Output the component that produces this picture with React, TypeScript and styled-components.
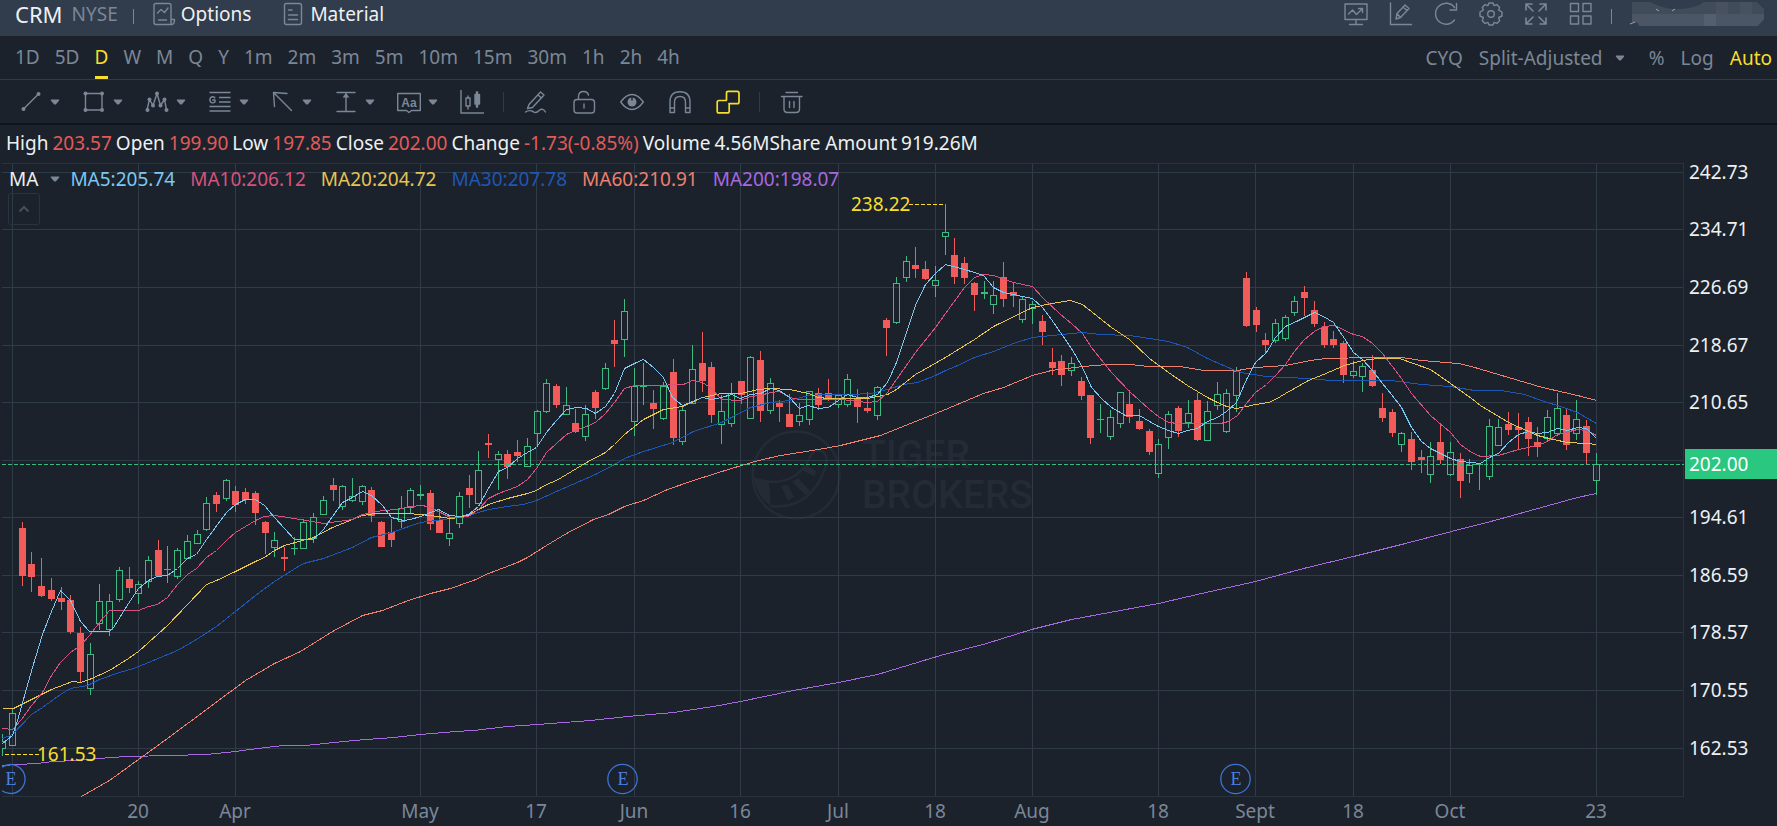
import React from "react";
import styled, { createGlobalStyle, css } from "styled-components";

const color = {
  page: "#1b222b",
  header: "#313c4c",
  line: "#2f3b47",
  muted: "#7b8797",
  text: "#eef0f2",
  accent: "#f8de2c",
  up: "#3cba80",
  down: "#f15b59",
  watermark: "#232b35",
};

const GlobalStyle = createGlobalStyle`
  * { box-sizing: border-box; }
  body {
    margin: 0;
    background: ${color.page};
    color: ${color.text};
    font-family: "Noto Sans", "Open Sans", sans-serif;
    font-size: 19px;
    line-height: 24px;
  }
  button, select { font: inherit; color: inherit; background: none; border: 0; padding: 0; margin: 0; cursor: pointer; }
`;

const Screen = styled.div`
  min-height: 100vh;
`;

const Header = styled.header`
  display: flex;
  align-items: center;
  height: 36px;
  padding: 0 13px 8px 15px;
  background: ${color.header};
`;

const Ticker = styled.h1`
  margin: 0 9px 0 0;
  font-size: 22px;
  line-height: 28px;
  font-weight: 400;
`;

const Exchange = styled.span`
  color: ${color.muted};
`;

const HeaderRule = styled.span`
  width: 1px;
  height: 15px;
  margin: 4px 18px 0 15px;
  background: ${color.muted};
`;

const HeaderLink = styled.a`
  display: flex;
  align-items: center;
  gap: 5px;
  margin-right: 30px;
  color: inherit;
  text-decoration: none;
`;

const HeaderTools = styled.div`
  display: flex;
  align-items: center;
  gap: 21px;
  margin-left: auto;
  margin-right: 3px;
`;

const IconButton = styled.button<{ $active?: boolean }>`
  display: flex;
  align-items: center;
  gap: 7px;
  color: ${(p) => (p.$active ? color.accent : color.muted)};
`;

const Tabs = styled.nav`
  display: flex;
  align-items: stretch;
  height: 44px;
  padding: 0 5px 0 15px;
  border-bottom: 1px solid ${color.line};
  color: ${color.muted};
`;

const TabGroup = styled.div`
  display: flex;
  gap: 15px;
`;

const Tab = styled.button<{ $active?: boolean }>`
  padding-top: 1px;
  border-bottom: 3px solid transparent;
  ${(p) =>
    p.$active &&
    css`
      color: ${color.accent};
      border-color: ${color.accent};
    `}
`;

const ScaleGroup = styled.div`
  display: flex;
  align-items: center;
  gap: 16px;
  margin-left: auto;
`;

const ScaleButton = styled.button<{ $active?: boolean }>`
  color: ${(p) => (p.$active ? color.accent : "inherit")};
`;

const SelectBox = styled.label`
  display: flex;
  align-items: center;
  gap: 12px;
  margin-right: 8px;
`;

const PlainSelect = styled.select`
  appearance: none;
  outline: 0;
`;

const Toolbar = styled.div`
  display: flex;
  align-items: center;
  gap: 24px;
  height: 45px;
  padding: 0 19px;
  border-bottom: 2px solid #0f141b;
`;

const MenuTools = styled.div`
  display: flex;
  align-items: center;
  gap: 22px;
`;

const ToolRule = styled.span`
  width: 1px;
  height: 20px;
  margin: 0 -4px -1px -5px;
  background: ${color.line};
`;

const Quote = styled.dl`
  display: flex;
  align-items: center;
  height: 38px;
  margin: 0;
  padding: 0 6px 2px;
  white-space: pre;
`;

const QuoteItem = styled.div<{ $tight?: boolean }>`
  display: flex;
  gap: 4px;
  margin-right: ${(p) => (p.$tight ? 0 : 4)}px;
`;

const QuoteLabel = styled.dt`
  margin: 0;
`;

const QuoteValue = styled.dd<{ $down?: boolean }>`
  margin: 0;
  color: ${(p) => (p.$down ? "#e35a58" : color.text)};
`;

const ChartArea = styled.main`
  position: relative;
`;

const ChartSvg = styled.svg`
  display: block;
  width: 100%;
  height: auto;
  font-family: "Noto Sans", "Open Sans", sans-serif;
  font-size: 19px;
`;

const Legend = styled.div`
  position: absolute;
  top: 4px;
  left: 9px;
  display: flex;
  align-items: center;
  gap: 15px;
`;

const LegendMenu = styled.button`
  display: flex;
  align-items: center;
  gap: 12px;
  margin-right: -5px;
`;

const LegendItem = styled.span<{ $color: string }>`
  color: ${(p) => p.$color};
`;

const Collapse = styled.button`
  position: absolute;
  top: 30px;
  left: 8px;
  display: grid;
  place-items: center;
  width: 32px;
  height: 32px;
  border: 1px solid #2a343f;
  border-radius: 3px;
  color: #46505d;
`;

const Caret = () => (
  <svg width="10" height="6" viewBox="0 0 10 6" aria-hidden="true">
    <path d="M1 0.5h8q.6.6 0 1.200L6 5.200q-1 .8-2 0L1 1.700Q.4 1.100 1 .5z" fill={color.muted} />
  </svg>
);

type GlyphProps = { size?: number; children: React.ReactNode };
const Glyph = ({ size = 24, children }: GlyphProps) => (
  <svg
    width={size}
    height={size}
    viewBox="0 0 24 24"
    fill="none"
    stroke="currentColor"
    strokeWidth="1.4"
    strokeLinecap="round"
    strokeLinejoin="round"
    aria-hidden="true"
  >
    {children}
  </svg>
);

const dot = (x: number, y: number) => <circle key={`${x}-${y}`} cx={x} cy={y} r="2" fill="currentColor" stroke="none" />;

const menuTools = [
  {
    name: "Trend line",
    icon: (
      <>
        <path d="M4.500 19L19 4.500" />
        {dot(4.5, 19)}
        {dot(19.5, 4)}
      </>
    ),
  },
  {
    name: "Rectangle",
    icon: (
      <>
        <path d="M3.500 3.500h16.500v16.500h-16.500z" />
        {[dot(3.5, 3.5), dot(20, 3.5), dot(3.5, 20), dot(20, 20)]}
      </>
    ),
  },
  {
    name: "Wave pattern",
    icon: (
      <>
        <path d="M2 20L4.500 9.500 8 15.500 12 3.500l3.500 12L19.500 9.500l2 10.500" />
        {[dot(2.5, 20), dot(4.5, 9.5), dot(8, 15.5), dot(12, 3.5), dot(15.5, 15.5), dot(19.5, 9.5), dot(21.5, 20)]}
      </>
    ),
  },
  {
    name: "Gann lines",
    icon: (
      <>
        <path d="M1.500 2.500h21M11 7.500h11.500M11 12h11.500M1.500 16.500h21M1.500 21h21" strokeLinecap="butt" />
        <path d="M6.800 7.800Q5.800 6.600 4.300 6.700 2 7 1.900 9.800 2 12.800 4.600 12.900 6 12.900 7 12V10H4.800" />
      </>
    ),
  },
  { name: "Arrow", icon: <path d="M3.500 16.500L2.500 2.500 16 3.500M3 3L20.500 20.500" /> },
  {
    name: "Price range",
    icon: (
      <>
        <path d="M3 2.500h18M3 21.500h18M12 4v17" />
        <path d="M8.500 7.500L12 3l3.500 4.500z" fill="currentColor" stroke="none" />
      </>
    ),
  },
  {
    name: "Text note",
    icon: (
      <>
        <path d="M.7 3.500h22.600v17h-8.800L12 22.500 9.500 20.500H.7z" />
        <text x="12" y="16.500" textAnchor="middle" fontFamily="Liberation Sans, sans-serif" fontSize="12" fontWeight="700" fill="currentColor" stroke="none">
          Aa
        </text>
      </>
    ),
  },
];

const singleTools = [
  {
    name: "Freehand",
    icon: (
      <>
        <path d="M5 14.500L16.500 2 20 5 8.500 17.500 3.500 18.500zM14 5l3.500 3" />
        <path d="M1.500 22Q5 19.500 9 21.500 12 24 15 20.500 19 17.500 21.500 22" />
      </>
    ),
  },
  {
    name: "Lock drawings",
    icon: (
      <>
        <rect x="2" y="9.500" width="20.500" height="13.500" rx="3" />
        <path d="M6.500 9.500V6Q7 1.500 11.500 1.500 15.500 1.500 16.500 5M12 14v4" />
      </>
    ),
  },
  {
    name: "Show drawings",
    icon: (
      <>
        <path d="M.7 12Q6 4.500 12 4.500T23.300 12Q18 19.500 12 19.500T.7 12z" />
        <circle cx="12" cy="12" r="4.500" fill="currentColor" stroke="none" />
        <path d="M12 7v3" stroke={color.page} />
      </>
    ),
  },
  {
    name: "Magnet",
    icon: (
      <path d="M2 22.500V12Q2 1.800 12 1.800T22 12v10.500h-4.500V12q0-5.500-5.500-5.500T6.500 12v10.500zM2 18h4.500M17.500 18H22" />
    ),
  },
  {
    name: "Keep drawing",
    active: true,
    icon: (
      <path d="M10.500 10V3q0-1.700 1.700-1.700h9Q23 1.300 23 3v9q0 1.700-1.800 1.700H13M10 10.500H3Q1.200 10.500 1.200 12.200v9Q1.200 22.900 3 22.900h8.500q1.700 0 1.700-1.700V14" strokeWidth="1.700" />
    ),
  },
];

const headerTools = [
  {
    name: "Chart display",
    icon: (
      <>
        <path d="M1 2h22v15.500H1zM12 17.500V22M5.500 22.500h13" />
        <path d="M4.500 12l4-4 4 4.500 6-6M14.500 6.500h4v4" />
      </>
    ),
  },
  {
    name: "Edit chart",
    icon: <path d="M1.500 1v21.500h21M7 17l1-5.500L16 3l4 3.500-8.500 9zM8 11.500l3.500 4M14 5l4 3.500" />,
  },
  { name: "Refresh", icon: <path d="M20.500 5.500A10.500 10.500 0 1 0 20.500 18M22.500 1.500v6.500H16" /> },
  {
    name: "Settings",
    icon: (
      <>
        <path d="M10 1h4l1 2.600 2.800-1L20.600 5.400 19.700 8.200 23 10v4l-3.300 1.500.9 3.200-2.800 2.700-2.800-1L14 23h-4l-1-2.600-3 1-2.700-2.700 1-3.200L1 14v-4l3.300-1.800L3.300 5.400 6 2.600l3 1z" />
        <circle cx="12" cy="12" r="3.300" />
      </>
    ),
  },
  {
    name: "Full screen",
    icon: (
      <path d="M2 8V2h6M2 2l7 7M16 2h6v6M22 2l-7 7M2 16v6h6M2 22l7-7M22 16v6h-6M22 22l-7-7" strokeWidth="1.600" />
    ),
  },
  { name: "Layout", icon: <path d="M1.500 1.500h8v8h-8zM14 1.500h8v8h-8zM1.500 14h8v8h-8zM14 14h8v8h-8z" /> },
];

const periods = ["1D", "5D", "D", "W", "M", "Q", "Y", "1m", "2m", "3m", "5m", "10m", "15m", "30m", "1h", "2h", "4h"];

const quote = [
  { label: "High", value: "203.57", down: true },
  { label: "Open", value: "199.90", down: true },
  { label: "Low", value: "197.85", down: true },
  { label: "Close", value: "202.00", down: true },
  { label: "Change", value: "-1.73(-0.85%)", down: true },
  { label: "Volume", value: "4.56M", tight: true },
  { label: "Share Amount", value: "919.26M" },
];

/* Moving averages, as points of the plot. */
const averages = [
  {
    label: "MA200:198.07",
    color: "#a768e0",
    points:
      "2,765 17,764 37,763 53,761 77,760 110,757 127,756 170,755 206,754 235,751 257,748 283,745 305,745 353,740 393,737 420,734 455,731 473,730 507,726 537,724 590,720 627,716 673,712 713,706 740,701 793,690 838,682 877,674 940,655 986,643 1031,629 1071,619 1158,603 1201,593 1255,581 1303,568 1353,556 1405,543 1451,531 1494,520 1577,497 1596,493",
  },
  {
    label: "MA60:210.91",
    color: "#ef7f6e",
    points:
      "81,796 109,780 138,759 167,738 206,709 245,680 274,663 300,651 332,631 362,615 382,610 408,600 430,593 450,588 473,580 488,573 517,562 527,557 546,545 566,533 593,519 608,514 624,506 643,500 667,489 693,480 731,468 758,460 780,455 818,449 840,445 880,435 915,421 945,409 983,393 1003,387 1032,375 1051,370 1082,366 1107,364 1130,364 1148,366 1180,366 1203,370 1237,370 1255,367 1285,365 1310,360 1325,358 1372,357 1401,357 1421,360 1458,363 1471,366 1508,377 1542,387 1577,395 1596,400",
  },
  {
    label: "MA30:207.78",
    color: "#1f57b4",
    points:
      "2,738 12,734 31,714 42,707 60,694 70,688 87,685 99,679 119,672 133,668 148,662 177,650 196,639 216,626 235,611 255,595 274,581 293,569 303,563 323,558 352,547 371,537 391,532 420,522 450,518 468,515 488,509 507,506 523,504 536,500 556,491 595,474 614,464 624,458 643,451 653,448 672,442 693,431 721,422 731,417 750,407 770,402 789,400 808,395 828,394 850,394 870,393 887,389 903,384 917,382 935,375 945,370 955,366 974,357 993,351 1013,343 1032,337 1051,335 1082,332 1100,334 1129,335 1149,338 1168,341 1187,347 1207,358 1237,371 1246,373 1266,376 1285,377 1310,378 1329,380 1369,380 1391,380 1421,384 1450,386 1474,390 1500,390 1524,394 1544,401 1563,407 1577,412 1596,423",
  },
  {
    label: "MA20:204.72",
    color: "#e6c353",
    points:
      "2,708 13,708 21,704 31,699 51,689 72,681 80,682 89,679 109,670 128,658 138,651 148,642 167,625 187,604 206,584 216,580 235,571 255,561 264,557 274,550 284,545 313,537 332,527 342,523 362,515 375,513 408,513 430,515 450,518 459,517 468,515 478,509 488,504 507,498 527,493 536,490 546,484 556,480 566,474 586,462 605,452 614,444 624,434 643,419 663,409 682,406 702,397 721,393 740,393 758,389 770,388 789,389 808,393 818,397 828,398 867,398 887,394 896,389 915,374 945,357 974,339 993,326 1032,307 1051,303 1070,300 1082,304 1111,327 1129,339 1149,358 1168,372 1187,385 1207,397 1217,402 1226,406 1236,408 1246,406 1255,404 1268,402 1275,399 1285,393 1308,380 1323,374 1344,365 1362,360 1377,358 1399,358 1413,363 1430,369 1450,383 1471,398 1480,405 1508,422 1528,431 1537,435 1553,439 1567,442 1586,443 1596,444",
  },
  {
    label: "MA10:206.12",
    color: "#d6527f",
    points:
      "2,728 12,729 21,719 31,705 42,692 51,675 60,662 70,652 80,645 89,635 99,622 109,610 138,610 148,606 157,604 167,597 177,584 187,574 196,568 206,557 216,550 226,540 235,532 255,520 264,516 274,515 294,518 323,523 352,519 362,514 382,510 397,509 410,506 422,505 430,507 450,517 459,517 468,516 478,509 488,498 498,493 517,486 527,479 536,468 546,452 566,434 577,429 586,426 595,422 605,413 614,402 624,388 634,385 653,385 683,384 692,380 702,382 711,388 721,399 740,400 750,396 760,395 770,392 779,391 789,397 799,399 840,399 850,400 867,402 877,401 887,392 896,379 915,352 935,327 945,313 964,287 974,277 983,274 993,275 1013,282 1032,286 1042,297 1060,314 1071,323 1082,333 1091,347 1111,372 1129,391 1149,409 1158,416 1168,422 1178,423 1220,423 1228,421 1237,415 1246,403 1255,392 1266,384 1275,375 1285,364 1294,351 1304,339 1314,331 1323,326 1334,325 1353,334 1362,336 1372,343 1382,353 1401,378 1411,393 1430,415 1450,432 1460,444 1471,452 1480,456 1498,455 1518,449 1537,445 1547,441 1557,434 1577,429 1586,430 1596,435",
  },
  {
    label: "MA5:205.74",
    color: "#7cc8f2",
    points:
      "2,743 12,735 17,720 32,667 42,634 51,611 60,590 70,600 80,621 89,631 109,631 113,627 128,603 138,588 148,580 157,576 167,575 177,568 187,558 196,554 206,539 226,512 235,504 245,499 255,499 264,505 274,517 284,528 294,539 313,539 323,529 332,516 342,502 352,497 362,491 371,495 382,505 391,517 403,520 410,519 420,516 438,509 449,515 459,516 468,514 478,506 488,488 498,471 507,467 517,458 527,452 536,447 546,432 556,420 566,409 576,407 586,408 595,413 605,406 614,393 624,368 634,363 643,359 653,367 663,377 672,397 682,405 692,401 702,397 711,399 721,397 731,394 740,398 750,394 760,393 770,388 779,390 789,397 799,408 808,405 818,408 828,407 838,400 847,394 857,397 867,397 877,394 887,382 896,362 906,332 915,305 925,284 935,273 945,264 964,269 974,272 983,275 993,287 1003,292 1013,294 1022,296 1032,298 1042,307 1051,319 1071,348 1082,367 1091,387 1101,398 1111,407 1125,415 1139,415 1149,421 1158,426 1168,430 1178,433 1187,430 1197,428 1207,421 1217,417 1226,411 1236,402 1246,379 1255,362 1266,352 1275,337 1285,326 1296,321 1314,312 1323,316 1333,322 1344,338 1353,352 1362,359 1372,370 1382,383 1391,394 1401,407 1411,427 1421,441 1430,448 1440,453 1450,458 1460,461 1480,463 1489,457 1498,453 1508,442 1518,434 1528,431 1537,433 1547,432 1557,428 1567,430 1577,427 1586,428 1596,438",
  },
];

/* One candle per trading day: direction, high, body top, body bottom, low. */
const candles = `
g708,713,745,745 r522,528,576,586 r552,564,577,592 r558,586,596,597 r578,590,599,601 r587,598,602,610
r595,600,632,634 r627,633,672,682 g643,654,688,695 g584,601,623,630 g594,601,629,636 g567,570,599,602
r567,579,588,593 g581,584,593,604 g556,560,581,588 r540,550,576,576 g546,569,570,583 g548,550,576,579
g535,541,558,559 g530,534,543,543 g497,503,529,531 r492,495,504,512 g479,480,498,501 r486,491,505,512
r488,492,500,504 r491,493,513,525 r521,522,533,554 g532,540,547,557 r547,557,559,571 g537,548,549,555
g519,522,548,548 g513,517,538,543 g496,500,514,515 r478,485,490,501 g485,486,506,510 g478,496,500,502
g485,486,501,505 r487,490,516,522 r521,522,547,547 r519,532,540,547 g496,508,521,528 g488,490,507,513
g485,494,496,500 r490,493,524,530 r510,520,533,533 g517,533,538,546 g492,496,523,528 r475,488,495,508
g451,470,503,504 r434,443,445,458 g451,454,459,490 r450,454,467,479 r440,452,456,462 g438,446,466,467
g410,411,433,446 g379,383,411,413 r384,386,405,408 g387,405,414,415 r409,423,432,433 g405,414,436,441
r390,392,408,419 g363,368,388,390 r320,340,344,367 g299,311,339,357 g368,386,421,436 g363,386,387,405
r390,403,409,429 g382,386,418,420 r359,372,438,445 g405,410,441,445 g345,369,403,403 r332,363,381,392
r362,367,415,423 g395,411,424,444 g383,393,423,427 r381,381,395,404 g356,357,418,418 r351,360,411,422
g378,383,410,414 r400,403,407,422 r394,414,427,427 g403,415,421,426 g391,391,419,425 r388,393,405,410
r379,393,399,401 g394,395,404,408 g374,379,404,407 r389,398,407,423 r392,408,411,413 g386,387,415,420
r318,320,328,356 g277,283,322,324 g256,261,277,282 r247,265,269,278 r261,269,279,280 g266,280,285,297
g204,232,236,255 r238,255,277,284 r257,263,278,284 r282,283,295,311 g281,292,294,299 g281,295,304,314
r262,277,299,307 r283,292,296,307 g296,299,319,323 g301,304,308,324 r315,321,332,345 r348,362,368,375
r355,361,375,386 g357,363,370,376 r377,381,396,400 r395,395,438,444 g404,419,420,433 g410,417,436,440
g392,392,423,428 r390,404,417,423 r409,421,429,430 r429,431,452,455 g439,444,473,478 g411,414,437,449
r406,408,431,437 g400,413,422,428 r393,400,440,441 g401,411,440,440 g382,394,405,410 g389,393,431,433
g367,371,395,412 r272,278,326,327 r307,310,325,332 r333,340,345,353 g319,323,340,343 g315,317,338,341
g296,301,312,316 r286,292,298,316 r301,310,324,327 r322,327,345,348 r331,339,345,348 r341,343,375,383
g361,371,375,378 g363,366,376,392 r355,370,386,387 r393,408,418,422 r409,412,433,437 g432,433,444,452
r432,439,462,470 r450,457,460,473 g442,456,474,483 r423,442,460,464 g442,452,474,476 r453,459,481,498
g459,465,473,483 g464,464,465,490 g419,426,476,480 g419,427,445,446 r412,424,430,435 r413,427,430,449
r417,422,439,456 r427,442,447,457 g410,417,438,442 g393,408,433,436 r409,415,445,450 g400,419,433,440
r420,426,453,464 g453,464,480,495`
  .trim()
  .split(/\s+/)
  .map((entry) => ({ up: entry[0] === "g", y: entry.slice(1).split(",").map(Number) }));

const FIRST_X = 12;
const STEP = 9.715;

const priceRows = [
  [172, "242.73"],
  [229, "234.71"],
  [287, "226.69"],
  [345, "218.67"],
  [402, "210.65"],
  [460, ""],
  [517, "194.61"],
  [575, "186.59"],
  [632, "178.57"],
  [690, "170.55"],
  [748, "162.53"],
] as const;

const dateColumns = [
  [12, ""],
  [138, "20"],
  [235, "Apr"],
  [420, "May"],
  [536, "17"],
  [634, "Jun"],
  [740, "16"],
  [838, "Jul"],
  [935, "18"],
  [1032, "Aug"],
  [1158, "18"],
  [1255, "Sept"],
  [1353, "18"],
  [1450, "Oct"],
  [1596, "23"],
] as const;

const Candle = ({ x, up, y }: { x: number; up: boolean; y: number[] }) => {
  const [high, top, bottom, low] = y;
  const paint = up ? color.up : color.down;
  const height = Math.max(bottom - top, 1);
  return (
    <g fill={paint}>
      {high < top && <rect x={x} y={high} width="1" height={top - high} />}
      {low > bottom && <rect x={x} y={bottom} width="1" height={low - bottom} />}
      {up && height > 2 ? (
        <rect x={x - 2.5} y={top + 0.5} width="6" height={height} fill="none" stroke={paint} />
      ) : (
        <rect x={x - 3} y={top} width="7" height={height} />
      )}
    </g>
  );
};

const Chart = () => (
  <ChartSvg viewBox="0 163 1777 663" role="img" aria-label="CRM daily candlestick chart">
    <g fill="none" stroke={color.watermark} strokeWidth="2.500">
      <circle cx="796" cy="475" r="43.500" />
      <path d="M753 478Q778 487 796 475 806 467 811 455 816 448 823 452 829 457 825 469 816 493 798 502 784 508 770 506" />
      <path
        d="M754 479L769 482 771 506Q757 497 754 479zM781 486l7-1 6 12-6 4zM792 482l6-4 12 13-4 4zM802 470l4-5 10 6-1 6z"
        fill={color.watermark}
        stroke="none"
      />
    </g>
    <g fill={color.watermark} fontFamily="Roboto, sans-serif" fontWeight="500" fontSize="39">
      <text x="862" y="468">TIGER</text>
      <text x="862" y="508">BROKERS</text>
    </g>

    <g fill={color.line} shapeRendering="crispEdges">
      <rect x="2" y="163" width="1682" height="1" opacity="0.7" />
      <rect x="2" y="796" width="1682" height="1" opacity="0.7" />
      <rect x="1683" y="163" width="1" height="634" opacity="0.7" />
      {priceRows.map(([y]) => (
        <rect key={y} x="2" y={y} width="1681" height="1" />
      ))}
      {dateColumns.map(([x]) => (
        <rect key={x} x={x} y="163" width="1" height="633" />
      ))}
    </g>

    <g shapeRendering="crispEdges">
      <g fill={color.up}>
        <path d="M2 741h3v1h-3zM5 741h1v7h-1zM2 734h1v7h-1zM2 748h4v1h-4zM2 748h1v8h-1z" />
      </g>
      {candles.map(({ up, y }, i) => (
        <Candle key={i} x={Math.round(FIRST_X + STEP * i)} up={up} y={y} />
      ))}
      {averages.map((line) => (
        <polyline key={line.label} points={line.points} transform="translate(.5 .5)" fill="none" stroke={line.color} />
      ))}
      <path d="M2 464.500H1684" stroke={color.up} strokeDasharray="4 2" />
      <path d="M909 204.500h34M5 754.500h34" stroke={color.accent} strokeDasharray="4 2" />
    </g>

    <g fill={color.accent}>
      <text x="851" y="211">238.22</text>
      <text x="37" y="761">161.53</text>
    </g>

    <g fill="none" stroke="#3d73d3" strokeWidth="1.300">
      <path d="M2 767.300A14.500 14.500 0 1 1 2 790.700" />
      <circle cx="622.500" cy="779" r="14.700" />
      <circle cx="1235.500" cy="779" r="14.700" />
    </g>
    <g fill="#4a80e0" fontFamily="Liberation Serif, serif" fontSize="18" textAnchor="middle">
      {[11, 623, 1236].map((x) => (
        <text key={x} x={x} y="785">
          E
        </text>
      ))}
    </g>

    <g fill={color.text}>
      {priceRows
        .filter(([, label]) => label)
        .map(([y, label]) => (
          <text key={y} x="1689" y={y + 7}>
            {label}
          </text>
        ))}
    </g>
    <rect x="1685" y="449" width="92" height="30" fill="#29c77f" />
    <text x="1689" y="471" fill="#fff">
      202.00
    </text>
    <g fill={color.muted} textAnchor="middle">
      {dateColumns
        .filter(([, label]) => label)
        .map(([x, label]) => (
          <text key={x} x={x} y="818">
            {label}
          </text>
        ))}
    </g>
  </ChartSvg>
);

const Account = () => (
  <svg width="134" height="24" viewBox="0 0 134 24" role="img" aria-label="Account">
    <path d="M2 0H20Q35 8 51 7 66 6 74 0H127L134 7V17L128 23H9L8 21 2 20z" fill="#414c5b" />
    <g fill="#4b5564">
      <path d="M2 12h132v5l-6 7H9l-1-3-6-1z" />
      <path d="M74 12h12v12H74z" fill="#545e6d" />
      <path d="M86 0h12v12H86zM110 0h12v12h-12z" opacity="0.6" />
    </g>
    <path d="M0 22l5-2M26 7l3 2M45 7l-3 2" stroke="#9aa4b1" />
  </svg>
);

export default function App() {
  return (
    <Screen>
      <GlobalStyle />
      <Header>
        <Ticker>CRM</Ticker>
        <Exchange>NYSE</Exchange>
        <HeaderRule />
        <HeaderLink href="#options">
          <IconButton as="span">
            <Glyph>
              <path d="M19 17V3.500Q19 1.500 17 1.500H4Q2 1.500 2 3.500V20.500Q2 22.500 4 22.500H20Q22.500 22 22.500 17.500H19V20.500Q19 22 20 22.500M5.500 11l3.500-3.500 3.500 3 3.500-4.500M6.500 18h8" />
            </Glyph>
          </IconButton>
          Options
        </HeaderLink>
        <HeaderLink href="#material">
          <IconButton as="span">
            <Glyph>
              <path d="M5.500 1.500h13q2 0 2 2v17q0 2-2 2h-13q-2 0-2-2v-17q0-2 2-2zM7.500 8h3.500M7.500 13h9M7.500 17.500h9" />
            </Glyph>
          </IconButton>
          Material
        </HeaderLink>
        <HeaderTools>
          {headerTools.map((tool) => (
            <IconButton key={tool.name} aria-label={tool.name}>
              <Glyph>{tool.icon}</Glyph>
            </IconButton>
          ))}
        </HeaderTools>
        <HeaderRule />
        <Account />
      </Header>

      <Tabs aria-label="Chart period">
        <TabGroup>
          {periods.map((p) => (
            <Tab key={p} $active={p === "D"}>
              {p}
            </Tab>
          ))}
        </TabGroup>
        <ScaleGroup>
          <ScaleButton>CYQ</ScaleButton>
          <SelectBox>
            <PlainSelect aria-label="Price adjustment" defaultValue="split">
              <option value="split">Split-Adjusted</option>
            </PlainSelect>
            <Caret />
          </SelectBox>
          <ScaleButton>%</ScaleButton>
          <ScaleButton>Log</ScaleButton>
          <ScaleButton $active>Auto</ScaleButton>
        </ScaleGroup>
      </Tabs>

      <Toolbar role="toolbar" aria-label="Drawing tools">
        <MenuTools>
          {menuTools.map((tool) => (
            <IconButton key={tool.name} aria-label={tool.name}>
              <Glyph>{tool.icon}</Glyph>
              <Caret />
            </IconButton>
          ))}
          <IconButton aria-label="Candle pattern">
            <Glyph>
              <path d="M1 0v23h22.500M8 6v2M8 16v3M6 8h4v8H6z" />
              <path d="M15 4.500h1.500V2h1v2.500H19.500V14h-2v3h-1v-3H15z" fill="currentColor" />
            </Glyph>
          </IconButton>
        </MenuTools>
        <ToolRule />
        {singleTools.map((tool) => (
          <IconButton key={tool.name} aria-label={tool.name} $active={tool.active}>
            <Glyph>{tool.icon}</Glyph>
          </IconButton>
        ))}
        <ToolRule />
        <IconButton aria-label="Delete drawings">
          <Glyph>
            <path d="M6 2.500h11.500M1.500 6.500h20.500M4 6.500V19q0 3.500 3.500 3.500h8.500q3.500 0 3.500-3.500V6.500M9.500 11.500v6M14 11.500v6" />
          </Glyph>
        </IconButton>
      </Toolbar>

      <Quote>
        {quote.map((item) => (
          <QuoteItem key={item.label} $tight={item.tight}>
            <QuoteLabel>{item.label}</QuoteLabel>
            <QuoteValue $down={item.down}>{item.value}</QuoteValue>
          </QuoteItem>
        ))}
      </Quote>

      <ChartArea>
        <Chart />
        <Legend>
          <LegendMenu>
            MA
            <Caret />
          </LegendMenu>
          {[...averages].reverse().map((line) => (
            <LegendItem key={line.label} $color={line.color}>
              {line.label}
            </LegendItem>
          ))}
        </Legend>
        <Collapse aria-label="Collapse indicators">
          <svg width="12" height="8" viewBox="0 0 12 8" fill="none" stroke="currentColor" strokeWidth="2" aria-hidden="true">
            <path d="M1.500 6.500L6 2l4.500 4.500" />
          </svg>
        </Collapse>
      </ChartArea>
    </Screen>
  );
}
